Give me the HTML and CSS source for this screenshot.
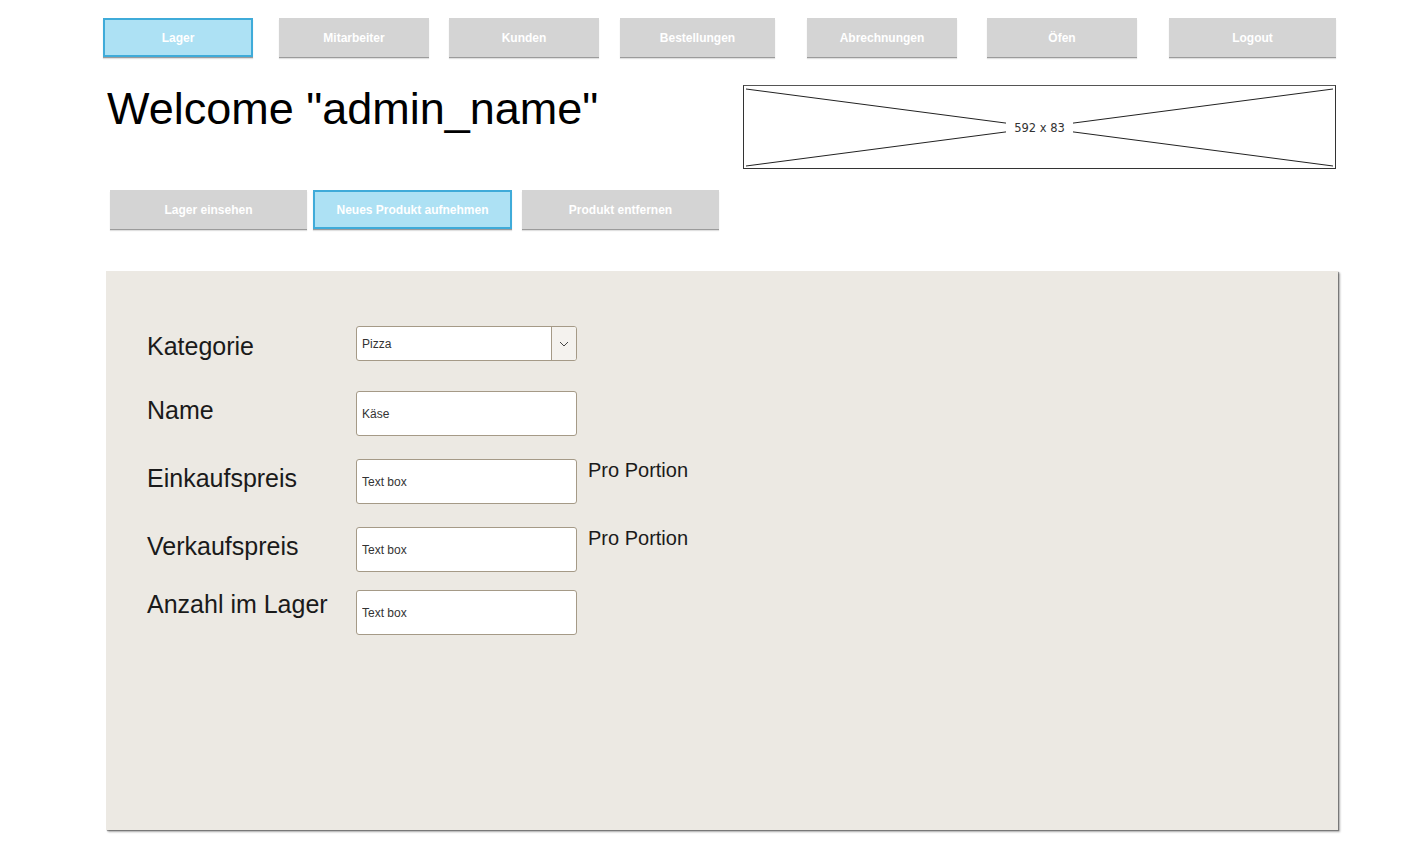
FILE: index.html
```html
<!DOCTYPE html>
<html lang="de">
<head>
<meta charset="utf-8">
<title>Lager - Neues Produkt</title>
<link rel="stylesheet" href="styles.css">
</head>
<body>
<nav class="topnav">
  <a class="btn btn-active nav-lager">Lager</a>
  <a class="btn nav-mitarbeiter">Mitarbeiter</a>
  <a class="btn nav-kunden">Kunden</a>
  <a class="btn nav-bestellungen">Bestellungen</a>
  <a class="btn nav-abrechnungen">Abrechnungen</a>
  <a class="btn nav-oefen">Öfen</a>
  <a class="btn nav-logout">Logout</a>
</nav>

<header class="header">
  <h1 class="welcome">Welcome "admin_name"</h1>
  <div class="placeholder">
    <svg class="placeholder-x" width="591" height="82" viewBox="0 0 591 82" preserveAspectRatio="none">
      <line x1="2" y1="3" x2="589" y2="80" stroke="#222" stroke-width="1"/>
      <line x1="2" y1="80" x2="589" y2="3" stroke="#222" stroke-width="1"/>
    </svg>
    <span class="placeholder-label">592 x 83</span>
  </div>
</header>

<div class="subnav">
  <a class="btn sub-btn">Lager einsehen</a>
  <a class="btn btn-active sub-btn">Neues Produkt aufnehmen</a>
  <a class="btn sub-btn">Produkt entfernen</a>
</div>

<main class="panel">
  <div class="form">
    <div class="row row-kategorie">
      <label class="label">Kategorie</label>
      <div class="select">
        <span class="select-value">Pizza</span>
        <span class="select-btn">
          <svg width="10" height="6" viewBox="0 0 10 6"><polyline points="1,1 5,5 9,1" fill="none" stroke="#444" stroke-width="1"/></svg>
        </span>
      </div>
    </div>
    <div class="row row-name">
      <label class="label">Name</label>
      <input class="textbox" type="text" value="Käse">
    </div>
    <div class="row row-ek">
      <label class="label">Einkaufspreis</label>
      <input class="textbox" type="text" value="Text box">
      <span class="unit">Pro Portion</span>
    </div>
    <div class="row row-vk">
      <label class="label">Verkaufspreis</label>
      <input class="textbox" type="text" value="Text box">
      <span class="unit">Pro Portion</span>
    </div>
    <div class="row row-anzahl">
      <label class="label">Anzahl im Lager</label>
      <input class="textbox" type="text" value="Text box">
    </div>
  </div>
</main>
</body>
</html>
```

FILE: styles.css
```css
* { box-sizing: border-box; }
html, body { margin: 0; padding: 0; background: #fff; }
body {
  font-family: "Liberation Sans", Arial, sans-serif;
  color: #111;
  width: 1425px;
  height: 843px;
  overflow: hidden;
}

/* buttons */
.btn {
  display: flex;
  align-items: center;
  justify-content: center;
  height: 39px;
  background: #d4d4d4;
  color: #fff;
  font-weight: bold;
  font-size: 12px;
  text-decoration: none;
  box-shadow: 0 1px 0 #9b9b9b, 0 2px 1px rgba(0,0,0,0.12);
  flex: none;
}
.btn-active {
  background: #ade1f4;
  border: 2px solid #3fabd9;
}

.topnav {
  display: flex;
  padding: 18px 0 0 103px;
}
.topnav .btn { width: 150px; }
.nav-mitarbeiter { margin-left: 26px; }
.nav-kunden { margin-left: 20px; }
.topnav .nav-bestellungen { margin-left: 21px; width: 155px; }
.nav-abrechnungen { margin-left: 32px; }
.nav-oefen { margin-left: 30px; }
.topnav .nav-logout { margin-left: 32px; width: 167px; }

/* header */
.header {
  display: flex;
  align-items: flex-start;
  padding: 28px 0 0 107px;
  height: 133px;
}
.welcome {
  margin: 0;
  font-weight: normal;
  font-size: 45px;
  line-height: 48px;
  color: #000;
  width: 636px;
}
.placeholder {
  position: relative;
  width: 593px;
  height: 84px;
  border: 1px solid #333;
  border-top-color: #555;
  background: #fff;
  display: flex;
  align-items: center;
  justify-content: center;
}
.placeholder-x {
  position: absolute;
  left: 0;
  top: 0;
}
.placeholder-label {
  position: relative;
  top: 1px;
  background: #fff;
  padding: 0 8px;
  font-family: "DejaVu Sans", sans-serif;
  font-size: 11.5px;
  color: #333;
  line-height: 20px;
}

/* sub nav */
.subnav {
  display: flex;
  gap: 6px;
  padding-left: 110px;
}
.sub-btn { width: 197px; }
.subnav .sub-btn:nth-child(2) { width: 199px; }
.subnav .sub-btn:nth-child(3) { margin-left: 4px; }

/* panel */
.panel {
  margin: 42px 0 0 106px;
  width: 1232px;
  height: 559px;
  background: #ece9e3;
  box-shadow: 1px 1px 1px rgba(0,0,0,0.35), 2px 2px 2px rgba(0,0,0,0.3);
  padding: 55px 0 0 41px;
}
.form { display: flex; flex-direction: column; }
.row {
  display: flex;
  align-items: flex-start;
}
.label {
  width: 209px;
  font-size: 25px;
  line-height: 28px;
  color: #1a1a1a;
}
.row-kategorie .label { margin-top: 6px; }
.row-name { margin-top: 30px; }
.row-name .label { margin-top: 5px; }
.row-ek { margin-top: 23px; }
.row-ek .label { margin-top: 5px; }
.row-vk { margin-top: 23px; }
.row-vk .label { margin-top: 5px; }
.row-anzahl { margin-top: 18px; }
.row-anzahl .label { margin-top: 0; }

.select {
  display: flex;
  width: 221px;
  height: 35px;
  border: 1px solid #a59a87;
  border-radius: 3px;
  background: #fff;
  overflow: hidden;
}
.select-value {
  flex: 1;
  display: flex;
  align-items: center;
  padding-left: 5px;
  font-size: 12px;
  color: #333;
}
.select-btn {
  width: 25px;
  border-left: 1px solid #a59a87;
  background: #f4f2ee;
  display: flex;
  align-items: center;
  justify-content: center;
}

.textbox {
  width: 221px;
  height: 45px;
  border: 1px solid #a59a87;
  border-radius: 3px;
  background: #fff;
  padding: 0 5px;
  margin: 0;
  font-family: "Liberation Sans", Arial, sans-serif;
  font-size: 12px;
  color: #333;
  outline: none;
}
.unit {
  margin-left: 11px;
  font-size: 20px;
  line-height: 24px;
  margin-top: -1px;
  color: #1a1a1a;
}
```
